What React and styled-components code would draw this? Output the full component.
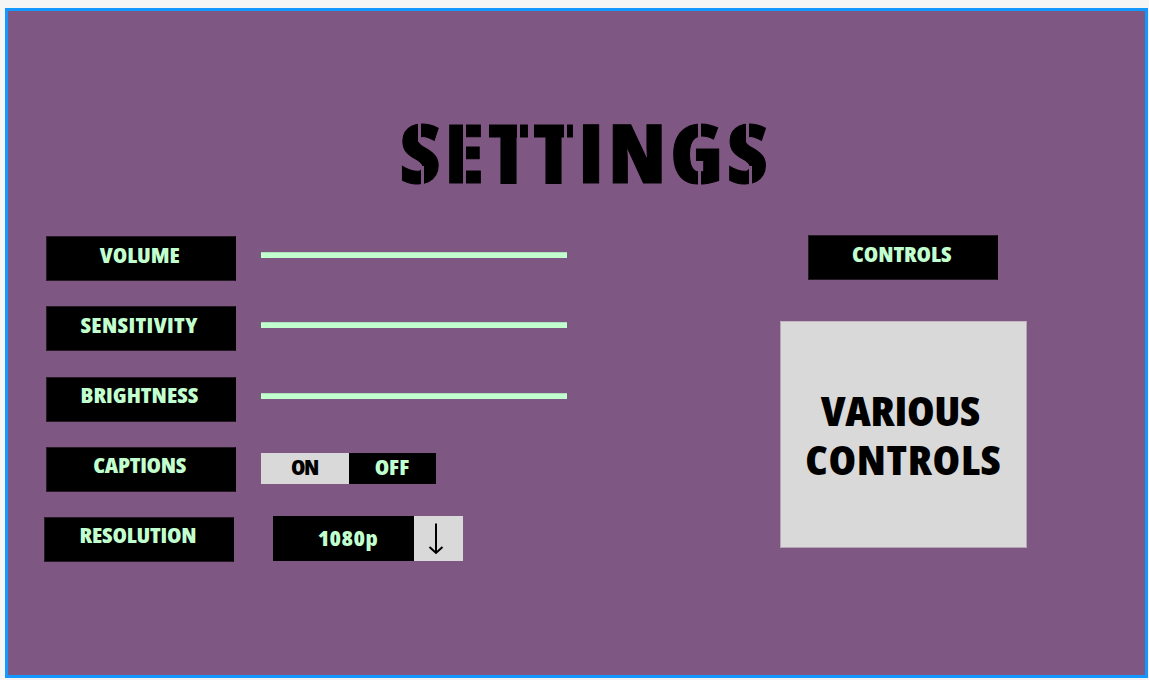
import React from "react";
import styled, { createGlobalStyle } from "styled-components";

const purple = "#7f5783";
const mint = "#c2ffcf";
const grey = "#d9d9d9";

const GlobalStyle = createGlobalStyle`
  body { margin: 0; background: #f5f5f5; overflow: hidden; }
  * { box-sizing: border-box; }
`;

const Page = styled.div`
  width: 1149px;
  height: 680px;
  padding: 8px 0 0 5px;
`;

const Frame = styled.main`
  width: 1143px;
  height: 670px;
  border: 3px solid #1497ff;
  background: ${purple};
  font-family: "Open Sans", "Liberation Sans", sans-serif;
  font-stretch: 75%;
  font-weight: 800;
`;

/* The condensed face, widened slightly. */
const Word = styled.span`
  display: inline-block;
  transform: scaleX(1.085);
  transform-origin: ${(p) => p.$origin || "center"};
  letter-spacing: ${(p) => p.$spacing || 0}px;
`;

/* One vertical stencil cut: left, top, height, all relative to the title's cap box. */
const cut = (x, y, h) =>
  `linear-gradient(${purple}, ${purple}) ${x}px ${y}px / 3px ${h}px no-repeat`;

const stencilCuts = [
  cut(17, 0, 20), cut(20, 44, 20),
  cut(62, 0, 64),
  cut(116, 0, 18),
  cut(163, 0, 18),
  cut(297, 0, 18), cut(297, 44, 20),
  cut(345, 0, 20), cut(348, 44, 20),
].join(", ");

const Title = styled.h1`
  position: relative;
  margin: 0;
  padding: 90px 0 0 392px;
  height: 225.2px;
  font-size: 82px;
  line-height: 100px;
  font-weight: 800;
  color: #000;
  -webkit-text-stroke: 1px #000;

  &::after {
    content: "";
    position: absolute;
    left: 393px;
    top: 111px;
    width: 370px;
    height: 64px;
    background: ${stencilCuts};
  }
`;

const Columns = styled.div`
  display: flex;
  align-items: flex-start;
`;

const SettingsList = styled.div`
  display: flex;
  flex-direction: column;
  width: 733px;
  padding-left: 38px;
  gap: 25.2px;
`;

const Row = styled.div`
  display: flex;
  align-items: flex-start;
  height: 45px;
  margin-left: ${(p) => p.$shift || 0}px;
`;

const Label = styled.div`
  display: flex;
  align-items: center;
  justify-content: center;
  flex: none;
  width: 190px;
  height: 45px;
  padding: 0 3px 8px 0;
  background: #000;
  border: 1px solid #261a27;
  border-right-color: #000;
  color: ${mint};
  font-size: 21.5px;
  line-height: 30px;
`;

const Slider = styled.div`
  width: 306px;
  height: 6px;
  margin: 16px 0 0 25px;
  background: ${mint};
  border-top: 1px solid #b0dfbb;
`;

const Toggle = styled.div`
  display: flex;
  height: 31px;
  margin: 6px 0 0 25px;
`;

const Option = styled.div`
  display: flex;
  align-items: center;
  justify-content: center;
  width: ${(p) => (p.$active ? 88 : 87)}px;
  padding-bottom: 3px;
  background: ${(p) => (p.$active ? grey : "#000")};
  color: ${(p) => (p.$active ? "#000" : mint)};
  font-size: 21.5px;
  line-height: 26px;
`;

const Select = styled.div`
  display: flex;
  width: 190px;
  height: 45px;
  margin: -1px 0 0 39px;
`;

const SelectValue = styled.div`
  display: flex;
  align-items: center;
  justify-content: center;
  width: 141px;
  padding: 0 0 2px 9px;
  background: #000;
  color: ${mint};
  font-size: 21.5px;
`;

const SelectArrow = styled.div`
  display: flex;
  align-items: center;
  justify-content: center;
  width: 49px;
  padding: 1px 5px 0 0;
  background: ${grey};
`;

const ControlsColumn = styled.section`
  display: flex;
  flex-direction: column;
  align-items: center;
  gap: 41px;
  margin-top: -1px;
  margin-left: 39px;
  width: 247px;

  & > ${Label} {
    margin-right: 1px;
  }
`;

const ControlsPanel = styled.div`
  width: 247px;
  height: 227px;
  padding-top: 64px;
  background: ${grey};
  border: 1px solid #b6a5b7;
  border-top-color: #c2b6c3;
  color: #000;
  font-size: 41px;
  line-height: 49px;
  text-align: center;
`;

const PanelLine = styled.div`
  height: 49px;
  padding-right: ${(p) => p.$inset}px;
`;

const ArrowDown = () => (
  <svg width="16" height="34" viewBox="0 0 16 34" fill="none" stroke="#000" strokeWidth="2">
    <path d="M8 1.5V31M1.5 25L8 31L14.5 25" />
  </svg>
);

export default function App() {
  return (
    <Page>
      <GlobalStyle />
      <Frame>
        <Title><Word $origin="left" $spacing={3.8}>SETTINGS</Word></Title>
        <Columns>
          <SettingsList>
            <Row>
              <Label><Word $spacing={-0.1}>VOLUME</Word></Label>
              <Slider />
            </Row>
            <Row>
              <Label><Word $spacing={0.3}>SENSITIVITY</Word></Label>
              <Slider />
            </Row>
            <Row>
              <Label><Word>BRIGHTNESS</Word></Label>
              <Slider />
            </Row>
            <Row>
              <Label><Word $spacing={-0.3}>CAPTIONS</Word></Label>
              <Toggle>
                <Option $active><Word $spacing={-1.2}>ON</Word></Option>
                <Option><Word>OFF</Word></Option>
              </Toggle>
            </Row>
            <Row $shift={-2}>
              <Label><Word $spacing={-0.2}>RESOLUTION</Word></Label>
              <Select>
                <SelectValue><Word $spacing={0.4}>1080p</Word></SelectValue>
                <SelectArrow><ArrowDown /></SelectArrow>
              </Select>
            </Row>
          </SettingsList>
          <ControlsColumn>
            <Label><Word $spacing={-0.1}>CONTROLS</Word></Label>
            <ControlsPanel>
              <PanelLine $inset={7}><Word $spacing={-0.3}>VARIOUS</Word></PanelLine>
              <PanelLine $inset={0}><Word $spacing={0.6}>CONTROLS</Word></PanelLine>
            </ControlsPanel>
          </ControlsColumn>
        </Columns>
      </Frame>
    </Page>
  );
}
